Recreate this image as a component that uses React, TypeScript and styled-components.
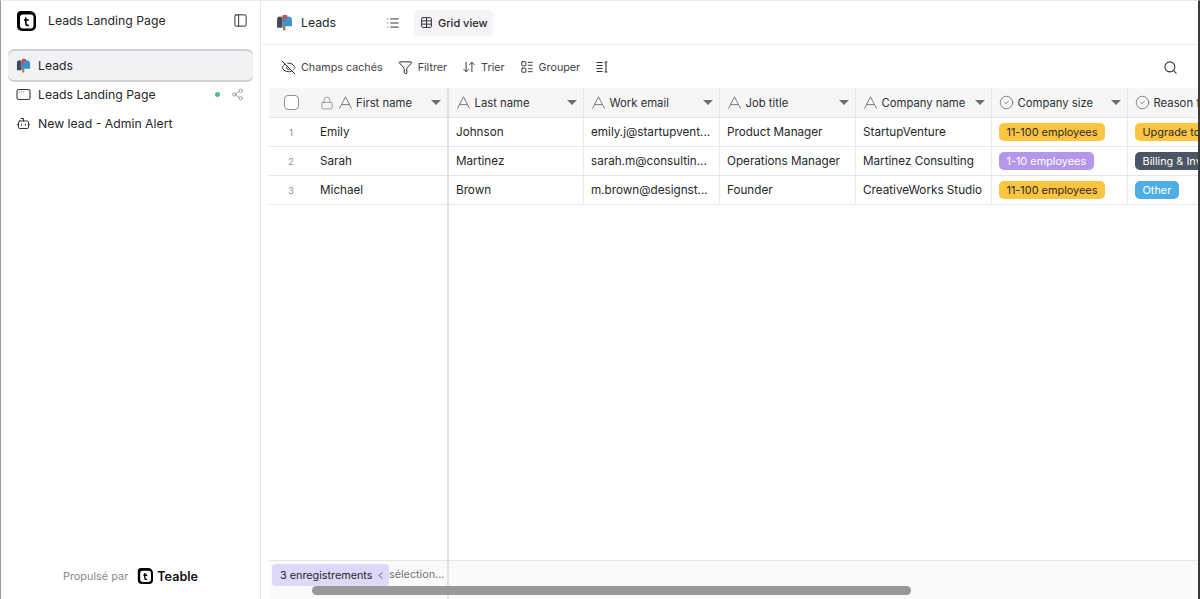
import React from 'react'
import styled, { createGlobalStyle } from 'styled-components'
import {
  ChevronLeft,
  CircleCheck,
  EyeOff,
  Filter,
  ArrowDownUp,
  LayoutList,
  List,
  Lock,
  PanelLeft,
  Search,
  Share2,
  Table,
  Bot,
} from 'lucide-react'

const GlobalStyle = createGlobalStyle`
  html, body {
    margin: 0;
    height: 100%;
    background: #fff;
    overflow: hidden;
  }
  #root {
    height: 100%;
  }
  * {
    box-sizing: border-box;
  }
`

const Frame = styled.div`
  display: flex;
  width: 1200px;
  height: 599px;
  position: relative;
  overflow: hidden;
  font-family: Inter, 'Liberation Sans', sans-serif;
  font-size: 12px;
  color: #27272a;
  border-left: 1px solid #9a9a9a;
  border-right: 2px solid #3a3a3a;
  border-top: 1px solid #ececec;
`

const Sidebar = styled.aside`
  flex: none;
  width: 260px;
  display: flex;
  flex-direction: column;
  border-right: 1px solid #e8e8ea;
`

const SidebarHeader = styled.div`
  display: flex;
  align-items: center;
  height: 39px;
  padding: 0 12px 0 15px;
  font-size: 12.25px;
  margin-bottom: 11px;
`

const SidebarTitle = styled.span`
  flex: 1;
  margin-left: 12px;
`

const Nav = styled.nav`
  display: flex;
  flex-direction: column;
  padding: 0 7px;
`

const NavItem = styled.div<{ $active?: boolean }>`
  display: flex;
  align-items: center;
  gap: 7px;
  height: 29px;
  padding: 0 9px 0 8px;
  font-size: 12.25px;
  border-radius: 6px;
  background: ${p => (p.$active ? '#f2f2f4' : 'transparent')};
  box-shadow: ${p => (p.$active ? '0 -2px 0 #d0d0d4, 0 2px 0 #d0d0d4' : 'none')};
`

const NavLabel = styled.span`
  flex: 1;
`

const StatusDot = styled.span`
  width: 5px;
  height: 5px;
  border-radius: 50%;
  background: #4fbf8b;
  margin-right: 4px;
`

const SidebarFooter = styled.div`
  margin-top: auto;
  height: 46px;
  display: flex;
  align-items: center;
  justify-content: center;
  gap: 9px;
  font-size: 10.9px;
  color: #8a8a90;
`

const Brand = styled.span`
  display: flex;
  align-items: center;
  gap: 4px;
  font-size: 12.6px;
  font-weight: 600;
  color: #111;
`

const Main = styled.main`
  flex: 1;
  min-width: 0;
  display: flex;
  flex-direction: column;
  position: relative;
`

const TopBar = styled.div`
  flex: none;
  display: flex;
  align-items: center;
  height: 44px;
  padding-left: 15px;
  border-bottom: 1px solid #ebebed;
`

const TableName = styled.span`
  font-size: 12.25px;
  margin-left: 8px;
  width: 50px;
`

const ViewMenu = styled.span`
  display: flex;
  margin-left: 35px;
  color: #333;
`

const ViewTab = styled.div`
  display: flex;
  align-items: center;
  gap: 5px;
  height: 26px;
  margin-left: 14px;
  padding: 0 5px 0 6px;
  border-radius: 5px;
  background: #f4f4f6;
  font-size: 11px;
  font-weight: 500;
`

const Toolbar = styled.div`
  flex: none;
  display: flex;
  align-items: center;
  height: 43px;
  padding: 1px 20px 0;
  font-size: 10.75px;
  color: #3f3f46;
  svg {
    flex: none;
    color: #2f2f34;
  }
`

const ToolButton = styled.div`
  display: flex;
  align-items: center;
  gap: 5px;
  margin-right: 15px;
`

const SearchButton = styled.div`
  margin-left: auto;
  display: flex;
`

const GridArea = styled.div`
  flex: 1;
  min-height: 0;
  display: flex;
  padding-left: 8px;
`

const FrozenPane = styled.div`
  flex: none;
  width: 180px;
  display: flex;
  flex-direction: column;
  border-right: 2px solid #e2e2e4;
`

const ScrollPane = styled.div`
  flex: 1;
  min-width: 0;
  display: flex;
  flex-direction: column;
  overflow: hidden;
`

const GridRow = styled.div<{ $head?: boolean }>`
  flex: none;
  display: flex;
  height: ${p => (p.$head ? '30px' : '29px')};
  border-bottom: 1px solid #e6e6e8;
  background: ${p => (p.$head ? '#f6f6f7' : '#fff')};
`

const RowNumber = styled.div`
  flex: none;
  width: 44px;
  display: flex;
  align-items: center;
  justify-content: center;
  font-size: 9px;
  color: #8d8d93;
`

const HeadCheckbox = styled.span`
  flex: none;
  width: 44px;
  display: flex;
  align-items: center;
  justify-content: center;
`

const CheckBox = styled.span`
  width: 15px;
  height: 15px;
  border: 1px solid #8f8f95;
  border-radius: 4px;
  background: #fff;
`

const Cell = styled.div<{ $width: number; $flush?: boolean }>`
  flex: none;
  width: ${p => p.$width}px;
  display: flex;
  align-items: center;
  padding: 0 7px;
  font-size: 11.7px;
  white-space: nowrap;
  overflow: hidden;
  border-right: ${p => (p.$flush ? 'none' : '1px solid #e9e9eb')};
`

const HeadCell = styled(Cell)`
  gap: 3.5px;
  padding-right: 6px;
  font-size: 11.3px;
  svg {
    flex: none;
  }
`

const HeadLabel = styled.span`
  flex: 1;
  min-width: 0;
  color: #2f2f34;
`

const SortCaret = styled.span`
  flex: none;
  width: 0;
  height: 0;
  border-left: 5px solid transparent;
  border-right: 5px solid transparent;
  border-top: 5px solid #6b7078;
`

const Tag = styled.span<{ $bg: string; $fg: string }>`
  display: inline-block;
  height: 18px;
  line-height: 18px;
  padding: 0 7.5px;
  border-radius: 5px;
  font-size: 10.9px;
  background: ${p => p.$bg};
  color: ${p => p.$fg};
`

const PaneFill = styled.div`
  flex: 1;
`

const StatBar = styled.div`
  flex: none;
  height: 39px;
  background: #fafafa;
  border-top: 1px solid #e6e6e8;
  display: flex;
  padding-top: 3px;
  font-size: 10.8px;
  color: #71717a;
`

const RecordBadge = styled.div`
  flex: none;
  display: flex;
  align-items: center;
  justify-content: space-between;
  margin-left: 3px;
  width: 117px;
  height: 22px;
  padding: 0 3px 0 8px;
  border-radius: 4px;
  background: #dcd9fa;
  color: #27272a;
`

const SelectionText = styled.span`
  line-height: 22px;
`

const ScrollThumb = styled.div`
  position: absolute;
  left: 51px;
  bottom: 4px;
  width: 599px;
  height: 9px;
  border-radius: 5px;
  background: #98989b;
`

function TeableLogo({ size }: { size: number }) {
  return (
    <svg width={size} height={size} viewBox="0 0 20 20" aria-hidden="true">
      <path d="M5 0h9a6 6 0 0 1 6 6v9a5 5 0 0 1-5 5H6a5 5 0 0 1-5-5V4a4 4 0 0 1 4-4z" fill="#000" />
      <rect x="4" y="3.5" width="13.5" height="14" rx="3" fill="#fff" />
      <path d="M9.8 6.4v6.4c0 1 .6 1.5 1.5 1.5h1.5M8 9h4.8" fill="none" stroke="#000" strokeWidth="1.7" />
    </svg>
  )
}

function Mailbox({ size }: { size: number }) {
  return (
    <svg width={size} height={size} viewBox="0 0 16 16" aria-hidden="true">
      <rect x="6.6" y="10" width="2.2" height="5.5" fill="#a9744a" />
      <path d="M1 13V5.2C1 3.4 2.1 2.4 3.5 2.4S6 3.4 6 5.2V13z" fill="#3f4a57" />
      <path d="M3.5 2.4h8.2c1.9 0 3.3 1.2 3.3 3V11.5H6V5.2c0-1.6-1-2.8-2.5-2.8z" fill="#3d93c9" />
      <rect x="6.4" y="1" width="1.7" height="6" fill="#d2444d" />
      <rect x="6.4" y="1" width="4.2" height="2.4" fill="#d2444d" />
    </svg>
  )
}

function TextFieldIcon() {
  return (
    <svg width="15" height="15" viewBox="0 0 15 15" fill="none" stroke="#7b7b82" strokeWidth="1" aria-hidden="true">
      <path d="M1.5 13.5 7.5 1.8l6 11.7M3.8 9.6h7.4" />
    </svg>
  )
}

function WindowIcon() {
  return (
    <svg width="15" height="15" viewBox="0 0 15 15" fill="none" stroke="#3a3a40" strokeWidth="1.1" aria-hidden="true">
      <rect x="1" y="2.5" width="13" height="10" rx="1.8" />
      <path d="M3 5h.6M5 5h.6M7 5h.6" />
    </svg>
  )
}

function DensityIcon() {
  return (
    <svg width="14" height="14" viewBox="0 0 14 14" fill="none" stroke="#333" strokeWidth="1.1" aria-hidden="true">
      <path d="M1.5 2.5h6M1.5 5.5h6M1.5 8.5h6M1.5 11.5h6M11 2v10M9.6 2h2.8M9.6 12h2.8" />
    </svg>
  )
}

const columns = [
  { name: 'Last name', width: 135, kind: 'text' },
  { name: 'Work email', width: 136, kind: 'text' },
  { name: 'Job title', width: 136, kind: 'text' },
  { name: 'Company name', width: 136, kind: 'text' },
  { name: 'Company size', width: 136, kind: 'select' },
  { name: 'Reason for contact', width: 136, kind: 'select' },
]

const tagColors: Record<string, { bg: string; fg: string }> = {
  '11-100 employees': { bg: '#fbc441', fg: '#2b2b2b' },
  '1-10 employees': { bg: '#b497ea', fg: '#ffffff' },
  'Upgrade to enterprise': { bg: '#fbc441', fg: '#2b2b2b' },
  'Billing & Invoicing': { bg: '#4b5563', fg: '#ffffff' },
  Other: { bg: '#4fade6', fg: '#ffffff' },
}

const records = [
  {
    first: 'Emily',
    cells: ['Johnson', 'emily.j@startupvent...', 'Product Manager', 'StartupVenture', '11-100 employees', 'Upgrade to enterprise'],
  },
  {
    first: 'Sarah',
    cells: ['Martinez', 'sarah.m@consultin...', 'Operations Manager', 'Martinez Consulting', '1-10 employees', 'Billing & Invoicing'],
  },
  {
    first: 'Michael',
    cells: ['Brown', 'm.brown@designst...', 'Founder', 'CreativeWorks Studio', '11-100 employees', 'Other'],
  },
]

export default function App() {
  return (
    <Frame>
      <GlobalStyle />
      <Sidebar>
        <SidebarHeader>
          <TeableLogo size={20} />
          <SidebarTitle>Leads Landing Page</SidebarTitle>
          <PanelLeft size={15} strokeWidth={1.5} />
        </SidebarHeader>
        <Nav>
          <NavItem $active>
            <Mailbox size={15} />
            <NavLabel>Leads</NavLabel>
          </NavItem>
          <NavItem>
            <WindowIcon />
            <NavLabel>Leads Landing Page</NavLabel>
            <StatusDot />
            <Share2 size={13} strokeWidth={1.2} color="#777" />
          </NavItem>
          <NavItem>
            <Bot size={15} strokeWidth={1.5} />
            <NavLabel>New lead - Admin Alert</NavLabel>
          </NavItem>
        </Nav>
        <SidebarFooter>
          Propulsé par
          <Brand>
            <TeableLogo size={16} />
            Teable
          </Brand>
        </SidebarFooter>
      </Sidebar>
      <Main>
        <TopBar>
          <Mailbox size={17} />
          <TableName>Leads</TableName>
          <ViewMenu>
            <List size={14} strokeWidth={1.7} />
          </ViewMenu>
          <ViewTab>
            <Table size={13} strokeWidth={1.7} />
            Grid view
          </ViewTab>
        </TopBar>
        <Toolbar>
          <ToolButton>
            <EyeOff size={15} strokeWidth={1.6} />
            Champs cachés
          </ToolButton>
          <ToolButton>
            <Filter size={15} strokeWidth={1.6} />
            Filtrer
          </ToolButton>
          <ToolButton>
            <ArrowDownUp size={14} strokeWidth={1.6} />
            Trier
          </ToolButton>
          <ToolButton>
            <LayoutList size={14} strokeWidth={1.6} />
            Grouper
          </ToolButton>
          <DensityIcon />
          <SearchButton>
            <Search size={15} strokeWidth={1.7} />
          </SearchButton>
        </Toolbar>
        <GridArea>
          <FrozenPane>
            <GridRow $head>
              <HeadCheckbox>
                <CheckBox />
              </HeadCheckbox>
              <HeadCell $width={134} $flush>
                <Lock size={14} strokeWidth={1.2} color="#7b7b82" />
                <TextFieldIcon />
                <HeadLabel>First name</HeadLabel>
                <SortCaret />
              </HeadCell>
            </GridRow>
            {records.map((record, index) => (
              <GridRow key={record.first}>
                <RowNumber>{index + 1}</RowNumber>
                <Cell $width={134} $flush>{record.first}</Cell>
              </GridRow>
            ))}
            <PaneFill />
            <StatBar>
              <RecordBadge>
                3 enregistrements
                <ChevronLeft size={11} strokeWidth={1.6} />
              </RecordBadge>
              <SelectionText>sélection...</SelectionText>
            </StatBar>
          </FrozenPane>
          <ScrollPane>
            <GridRow $head>
              {columns.map(column => (
                <HeadCell key={column.name} $width={column.width}>
                  {column.kind === 'text' ? (
                    <TextFieldIcon />
                  ) : (
                    <CircleCheck size={15} strokeWidth={1.1} color="#55555c" />
                  )}
                  <HeadLabel>{column.name}</HeadLabel>
                  <SortCaret />
                </HeadCell>
              ))}
            </GridRow>
            {records.map(record => (
              <GridRow key={record.first}>
                {record.cells.map((value, index) => (
                  <Cell key={columns[index].name} $width={columns[index].width}>
                    {columns[index].kind === 'select' ? (
                      <Tag $bg={tagColors[value].bg} $fg={tagColors[value].fg}>{value}</Tag>
                    ) : (
                      value
                    )}
                  </Cell>
                ))}
              </GridRow>
            ))}
            <PaneFill />
            <StatBar />
          </ScrollPane>
        </GridArea>
        <ScrollThumb />
      </Main>
    </Frame>
  )
}
